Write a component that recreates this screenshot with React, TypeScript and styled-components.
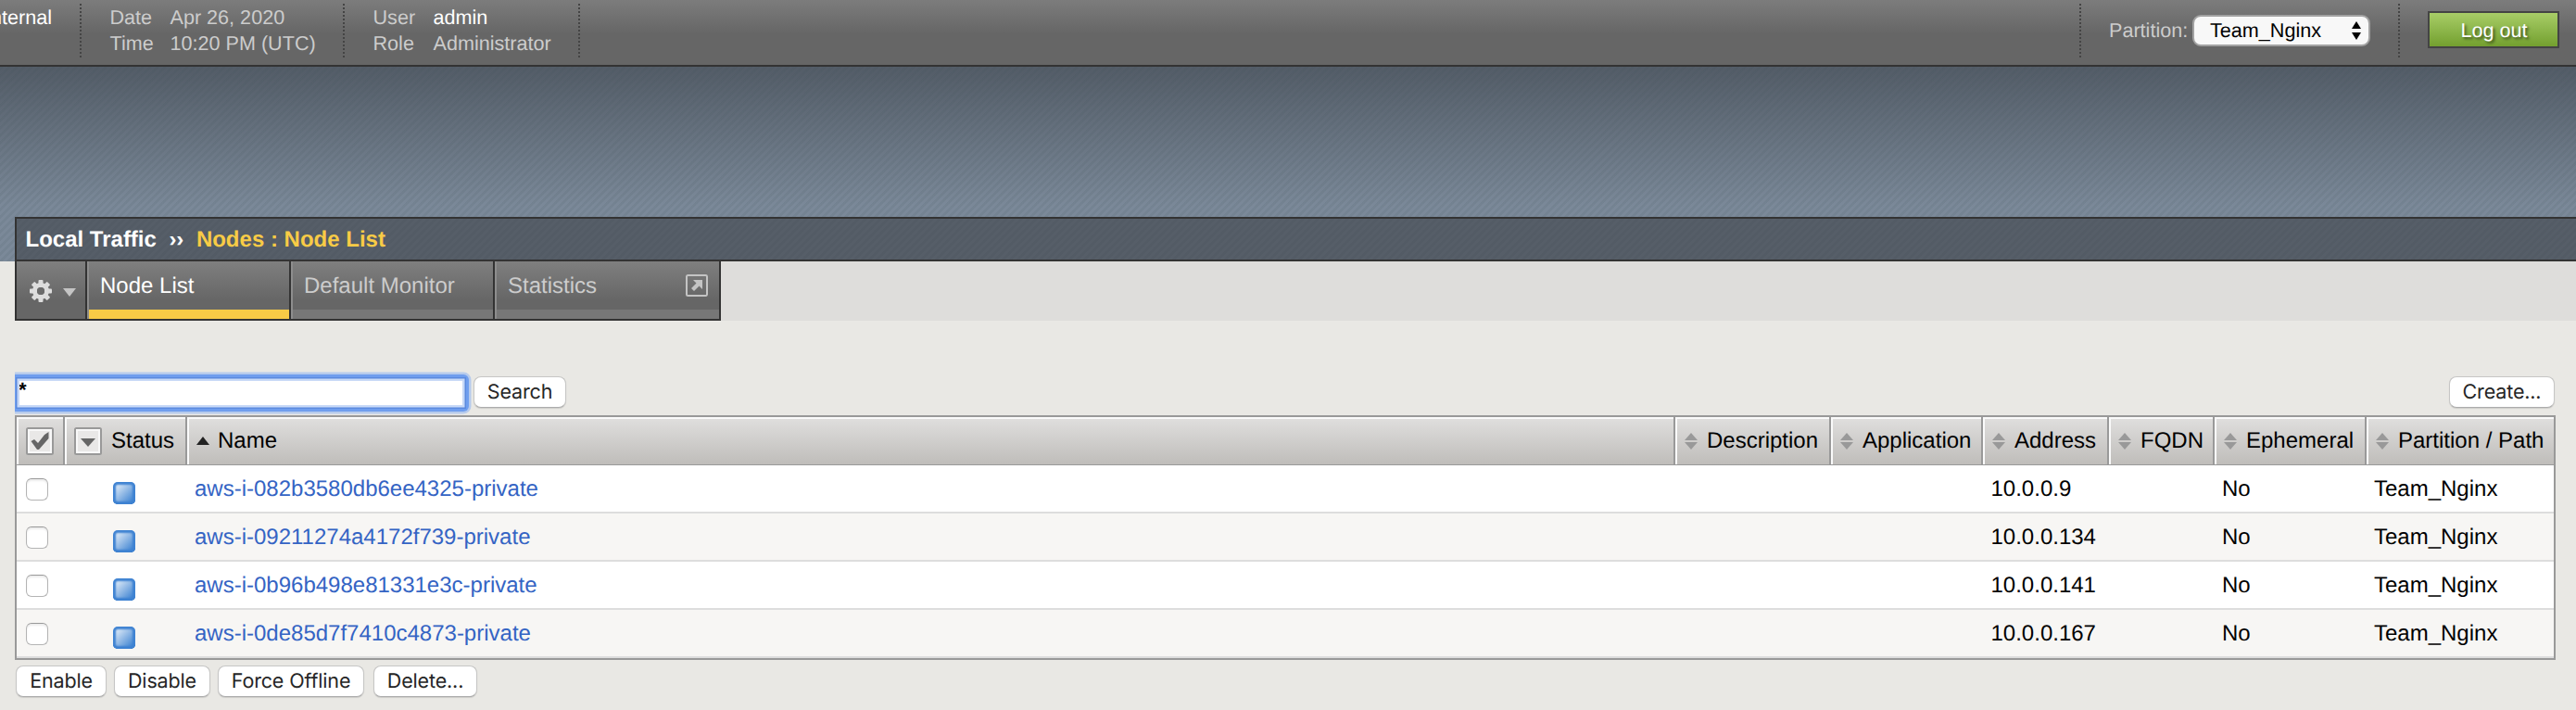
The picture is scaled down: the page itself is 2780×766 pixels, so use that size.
import React from 'react';
import styled, { createGlobalStyle } from 'styled-components';

const GlobalStyle = createGlobalStyle`
  * { box-sizing: border-box; }
  body {
    margin: 0;
    background: #e9e8e4;
    font-family: "Liberation Sans", Arial, sans-serif;
    font-size: 24px;
    color: #000;
    text-rendering: geometricPrecision;
  }
  button, input { font: inherit; margin: 0; text-rendering: inherit; }
`;

const Page = styled.div`
  width: 2780px;
  height: 766px;
  overflow: hidden;
  background: #e9e8e4;
`;

const TopBar = styled.header`
  height: 72px;
  display: flex;
  padding-top: 4px;
  font-size: 21.6px;
  line-height: 28px;
  color: #ccc;
  background: linear-gradient(#7c7c7c, #666 52%, #666);
  border-bottom: 2px solid #333;
`;

const Info = styled.dl<{ $width: number }>`
  width: ${(p) => p.$width}px;
  height: 57px;
  margin: 0;
  padding: 0.5px 0 0 30.5px;
  display: grid;
  grid-template-columns: 65px 1fr;
  grid-auto-rows: 28px;
  white-space: nowrap;
`;

const Term = styled.dt``;
const Value = styled.dd<{ $strong?: boolean }>`
  margin: 0;
  color: ${(p) => (p.$strong ? '#fff' : 'inherit')};
`;

const HostName = styled.div`
  width: 86px;
  display: flex;
  justify-content: flex-end;
  padding: 0.5px 30px 0 0;
  color: #fff;
`;

const Divider = styled.i`
  width: 2px;
  height: 58px;
  flex: none;
  background: repeating-linear-gradient(#444 0 2px, transparent 2px 4px);
`;

const Spacer = styled.div`
  flex: 1;
`;

const PartitionBox = styled.div`
  width: 342px;
  padding: 12px 0 0 30px;
  display: flex;
`;

const PartitionLabel = styled.span`
  width: 90px;
  line-height: 34px;
`;

const Select = styled.button`
  width: 192px;
  height: 34px;
  padding: 0 8px 0 17px;
  border: 2px solid #a2a2a2;
  border-radius: 9px;
  background: #f8f8f8;
  color: #000;
  display: flex;
  align-items: center;
  justify-content: space-between;
  line-height: 30px;
`;

const LogoutBox = styled.div`
  width: 190px;
  padding: 8px 0 0 30px;
`;

const Logout = styled.button`
  width: 142px;
  height: 40px;
  padding: 1px 0 0 1px;
  border: 2px solid #444;
  background: linear-gradient(#a8cd67, #73a02f);
  color: #fff;
  text-shadow: 2px 2px 3px rgba(0, 0, 0, 0.55);
`;

const Banner = styled.div`
  height: 210px;
  padding: 162px 0 0 16px;
  background:
    repeating-linear-gradient(135deg, rgba(60, 80, 85, 0.1) 0 2.83px, transparent 2.83px 5.66px),
    linear-gradient(#535c67, #7b8999 72%, #7b8999);
`;

const Breadcrumb = styled.div`
  height: 48px;
  border: 2px solid #333;
  border-right: 0;
  padding-left: 9.5px;
  display: flex;
  font-weight: bold;
  line-height: 45px;
  color: #fff;
  background: rgba(50, 52, 56, 0.5);
`;

const Chevrons = styled.span`
  width: 43px;
  text-align: center;
`;

const Current = styled.span`
  color: #f8cb46;
`;

const TabStrip = styled.nav`
  height: 64px;
  margin-left: 16px;
  display: flex;
  background: #dedddb;
`;

const Tabs = styled.div`
  display: flex;
  border: solid #333;
  border-width: 0 2px 2px;
`;

const Tab = styled.div<{ $width: number; $active?: boolean }>`
  width: ${(p) => p.$width}px;
  height: 62px;
  padding: 1px 12px 0 12px;
  display: flex;
  justify-content: space-between;
  line-height: 51px;
  color: ${(p) => (p.$active ? '#fff' : '#ccc')};
  border: solid #8d8d8d;
  border-width: 0 0 0 2px;
  box-shadow: -2px 0 0 #333;
  margin-left: 2px;
  background:
    linear-gradient(${(p) => (p.$active ? '#f8cb46, #f8cb46' : '#777, #777')}) left bottom / 100% 10px no-repeat,
    linear-gradient(#7f7f7f, #666 42px);
`;

const GearTab = styled.div`
  width: 74px;
  height: 62px;
  padding: 18px 10px 0 12px;
  display: flex;
  justify-content: space-between;
  background: linear-gradient(#7f7f7f, #666 42px);
`;

const PopOut = styled.svg`
  margin-top: 13px;
`;

const SearchRow = styled.div`
  height: 102px;
  padding: 55px 23px 0 16px;
  display: flex;
  align-items: flex-start;
`;

const SearchField = styled.div`
  width: 495px;
  height: 46px;
  padding: 3px 5px 3px 0;
  display: flex;
  overflow: hidden;
`;

const FocusRing = styled.div`
  width: 490px;
  height: 40px;
  padding: 7px 7px 7px 5px;
  display: flex;
  border-radius: 0 6px 6px 0;
  background: #6f9eee;
  box-shadow: 0 0 0 2.5px #b7cbec;
`;

const SearchInput = styled.input`
  width: 479px;
  height: 26px;
  padding: 0 0 6px;
  border: 0;
  outline: 0;
  background: #fff;
  font-size: 22px;
  font-weight: bold;
  line-height: 20px;
  text-indent: -1px;
  box-shadow: 0 0 0 2.5px #c8d9f7, 0 0 0 4px #5b8ade;
`;

const Button = styled.button<{ $width: number }>`
  width: ${(p) => p.$width}px;
  height: 34px;
  padding: 1px 0 0;
  flex: none;
  border: 1px solid #c6c6c5;
  border-bottom-color: #acacac;
  border-radius: 8px;
  background: #fff;
  box-shadow: 0 1px 1px rgba(0, 0, 0, 0.12);
  font-family: Inter, "Liberation Sans", sans-serif;
  font-size: 21.5px;
  letter-spacing: -0.15px;
  line-height: 31px;
  color: #262626;
  white-space: nowrap;
`;

const ToolbarSlot = styled.div`
  padding-top: 5px;
  display: flex;
`;

const columns = '52px 132px 1606px 168px 164px 136px 114px 164px 202px';

const Table = styled.section`
  width: 2742px;
  height: 264px;
  margin-left: 16px;
  border: 2px solid #999;
`;

const HeaderRow = styled.div`
  height: 52px;
  display: grid;
  grid-template-columns: ${columns};
  border-bottom: 2px solid #999;
`;

const HeadCell = styled.div<{ $pad: number }>`
  padding-left: ${(p) => p.$pad}px;
  display: flex;
  align-items: center;
  line-height: 50px;
  white-space: nowrap;
  background: linear-gradient(#e0dfde, #bfbdba);
  box-shadow: inset 2px 2px 0 #fafafa;
  border-right: 2px solid #999;
  &:last-child { border-right: 0; }
`;

const HeadLabel = styled.span<{ $gap: number }>`
  margin-left: ${(p) => p.$gap}px;
  padding-top: 1px;
`;

const Row = styled.div<{ $alt: boolean }>`
  height: 52px;
  display: grid;
  grid-template-columns: ${columns};
  line-height: 52px;
  background: ${(p) => (p.$alt ? '#f7f6f4' : '#fff')};
  border-bottom: 2px solid #ddd;
`;

const Cell = styled.div<{ $pad?: number }>`
  padding-left: ${(p) => p.$pad ?? 0}px;
  white-space: nowrap;
`;

const NodeLink = styled.a`
  color: #3464c4;
`;

const Check = styled.span`
  display: block;
  width: 24px;
  height: 24px;
  margin: 14px 0 0 10px;
  border: 1.5px solid #b4b4b4;
  border-top-color: #999;
  border-radius: 6px;
  background: #fff;
  box-shadow: inset 0 2px 2px rgba(0, 0, 0, 0.08);
`;

const StatusIcon = styled.span`
  display: block;
  width: 24px;
  height: 24px;
  margin: 18px 0 0 52px;
  border-radius: 5px;
  background: linear-gradient(135deg, #dce9f7 15%, #4487d3 85%);
  box-shadow: inset 0 0 2px 3px #3f83d2, inset 0 -2px 0 #2366be;
`;

const Actions = styled.div`
  display: flex;
  gap: 8px;
  padding: 6px 0 0 17px;
  > :last-child { margin-left: 2px; }
`;

const SortIcon = () => (
  <svg width="14" height="18" viewBox="0 0 14 18" fill="#999">
    <path d="M7 0l7 8H0zM0 10h14l-7 8z" />
  </svg>
);

const HeadBox = ({ checked }: { checked?: boolean }) => (
  <svg width="30" height="30" viewBox="0 0 30 30">
    <rect x="1" y="1" width="28" height="28" rx="1.5" fill="#e9e8e7" stroke="#999" strokeWidth="2" />
    <path d="M3 27V3h24v24z" fill="none" stroke="#f8f8f8" strokeWidth="2" />
    {checked ? (
      <path d="M5.500 15l3.500-2 4 4 7-9 4.500-3v7L14 24h-2z" fill="#666" />
    ) : (
      <path d="M7 12h16l-8 9z" fill="#666" />
    )}
  </svg>
);

const nodes = [
  { name: 'aws-i-082b3580db6ee4325-private', address: '10.0.0.9' },
  { name: 'aws-i-09211274a4172f739-private', address: '10.0.0.134' },
  { name: 'aws-i-0b96b498e81331e3c-private', address: '10.0.0.141' },
  { name: 'aws-i-0de85d7f7410c4873-private', address: '10.0.0.167' },
];

const sortable = ['Description', 'Application', 'Address', 'FQDN', 'Ephemeral', 'Partition / Path'];

export default function App() {
  return (
    <Page>
      <GlobalStyle />
      <TopBar>
        <HostName>nternal</HostName>
        <Divider />
        <Info $width={282}>
          <Term>Date</Term><Value>Apr 26, 2020</Value>
          <Term>Time</Term><Value>10:20 PM (UTC)</Value>
        </Info>
        <Divider />
        <Info $width={252}>
          <Term>User</Term><Value $strong>admin</Value>
          <Term>Role</Term><Value>Administrator</Value>
        </Info>
        <Divider />
        <Spacer />
        <Divider />
        <PartitionBox>
          <PartitionLabel>Partition:</PartitionLabel>
          <Select>
            Team_Nginx
            <svg width="10" height="20" viewBox="0 0 10 20"><path d="M5 0l5 8H0zM0 12h10l-5 8z" /></svg>
          </Select>
        </PartitionBox>
        <Divider />
        <LogoutBox><Logout>Log out</Logout></LogoutBox>
      </TopBar>
      <Banner>
        <Breadcrumb>
          <span>Local Traffic</span>
          <Chevrons>››</Chevrons>
          <Current>Nodes : Node List</Current>
        </Breadcrumb>
      </Banner>
      <TabStrip>
        <Tabs>
          <GearTab>
            <svg width="28" height="28" viewBox="-14 -14 28 28">
              <g fill="#ddd">
                {[0, 45, 90, 135].map((a) => (
                  <rect key={a} x="-2.5" y="-12" width="5" height="24" rx="1" transform={`rotate(${a})`} />
                ))}
              </g>
              <circle r="6.5" fill="#6b6b6b" stroke="#ddd" strokeWidth="5" />
              <circle r="4" fill="#6b6b6b" />
            </svg>
            <svg width="14" height="28" viewBox="0 0 14 28"><path d="M0 11h14l-7 9z" fill="#c4c4c4" /></svg>
          </GearTab>
          <Tab $width={218} $active>Node List</Tab>
          <Tab $width={218}>Default Monitor</Tab>
          <Tab $width={242}>
            Statistics
            <PopOut width="24" height="24" viewBox="0 0 24 24">
              <rect x="1" y="1" width="22" height="22" rx="1.5" fill="none" stroke="#c4c4c4" strokeWidth="2" />
              <path d="M8 6h10v10l-3.500-3.500L9 18l-3-3 5.500-5.500z" fill="#c4c4c4" />
            </PopOut>
          </Tab>
        </Tabs>
      </TabStrip>
      <SearchRow>
        <SearchField>
          <FocusRing><SearchInput defaultValue="*" /></FocusRing>
        </SearchField>
        <ToolbarSlot><Button $width={100}>Search</Button></ToolbarSlot>
        <Spacer />
        <ToolbarSlot><Button $width={114}>Create...</Button></ToolbarSlot>
      </SearchRow>
      <Table>
        <HeaderRow>
          <HeadCell $pad={10}><HeadBox checked /></HeadCell>
          <HeadCell $pad={10}><HeadBox /><HeadLabel $gap={10}>Status</HeadLabel></HeadCell>
          <HeadCell $pad={10}>
            <svg width="14" height="9" viewBox="0 0 14 9"><path d="M7 0l7 9H0z" fill="#222" /></svg>
            <HeadLabel $gap={9}>Name</HeadLabel>
          </HeadCell>
          {sortable.map((label) => (
            <HeadCell key={label} $pad={10}><SortIcon /><HeadLabel $gap={10}>{label}</HeadLabel></HeadCell>
          ))}
        </HeaderRow>
        {nodes.map((n, i) => (
          <Row key={n.name} $alt={i % 2 === 1}>
            <Cell><Check /></Cell>
            <Cell><StatusIcon /></Cell>
            <Cell $pad={8}><NodeLink>{n.name}</NodeLink></Cell>
            <Cell />
            <Cell />
            <Cell $pad={8.5}>{n.address}</Cell>
            <Cell />
            <Cell $pad={8}>No</Cell>
            <Cell $pad={8}>Team_Nginx</Cell>
          </Row>
        ))}
      </Table>
      <Actions>
        <Button $width={98}>Enable</Button>
        <Button $width={104}>Disable</Button>
        <Button $width={158}>Force Offline</Button>
        <Button $width={112}>Delete...</Button>
      </Actions>
    </Page>
  );
}
